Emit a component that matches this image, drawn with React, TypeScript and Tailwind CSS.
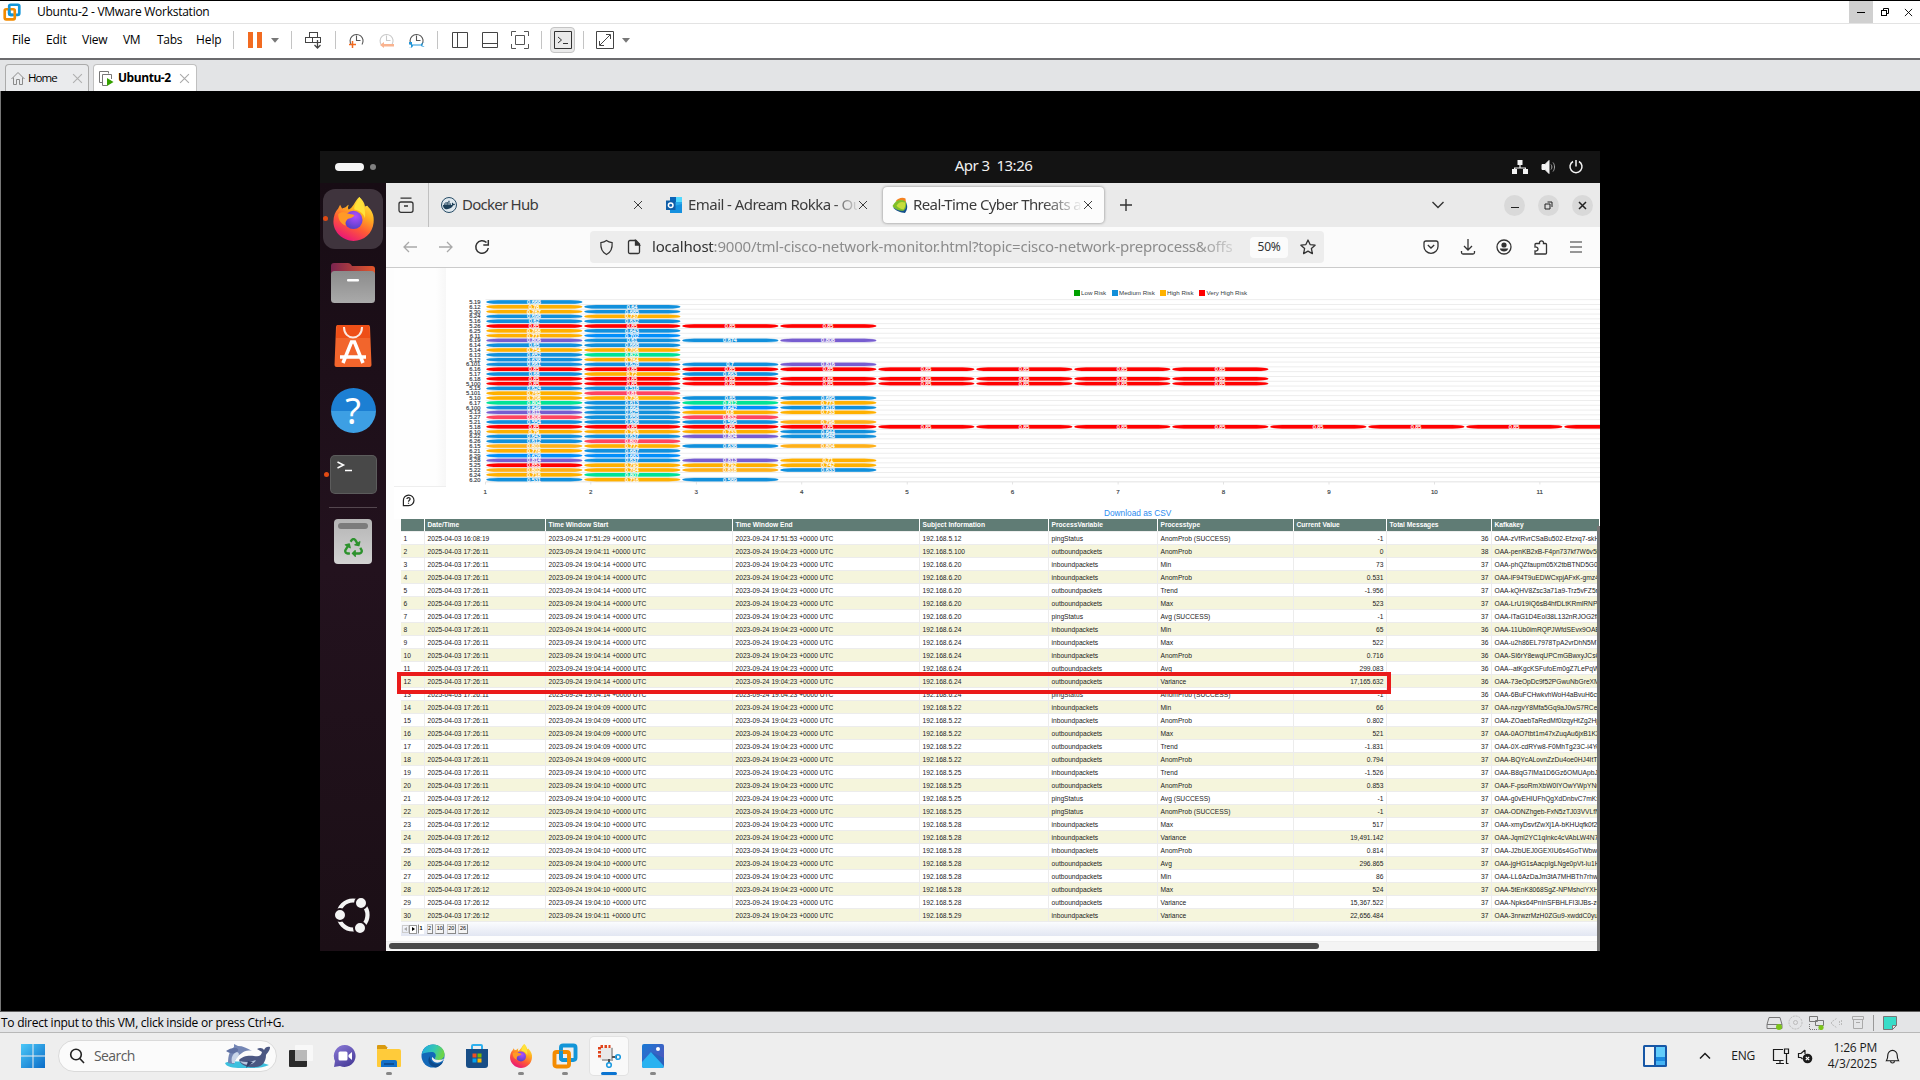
import React from "react";
import { FaDocker, FaRecycle } from "react-icons/fa";

const UI = "font-['Open_Sans','Noto_Sans',sans-serif]";

/* ---------- shared drawings ---------- */

function FirefoxLogo({ className }: { className: string }) {
  return (
    <svg viewBox="0 0 44 46" className={className}>
      <defs>
        <linearGradient id="ffBody" x1="0.8" y1="0" x2="0.3" y2="1">
          <stop offset="0" stopColor="#fff04a" />
          <stop offset="0.35" stopColor="#ffb01f" />
          <stop offset="0.65" stopColor="#ff5a36" />
          <stop offset="1" stopColor="#e8127c" />
        </linearGradient>
        <radialGradient id="ffCore" cx="0.6" cy="0.3" r="0.8">
          <stop offset="0" stopColor="#b04dff" />
          <stop offset="1" stopColor="#4a3fc0" />
        </radialGradient>
      </defs>
      <path d="M28 0c5 4 6 9 6 10 2-1 3-1 3 0 4 4 7 9 6 17-1 11-10 19-21 19S1 37 1 26c0-6 2-11 5-14l2-4 2 4 3-1c1 0 2-2 4-3-1 3-1 4 0 5 4-1 6-8 11-13z" fill="url(#ffBody)" />
      <circle cx="22" cy="24" r="9.5" fill="url(#ffCore)" />
      <path d="M6 18c3-3 7-2 9-1 3 1 6 1 8 2-2 3-5 3-7 4-2 2-3 4-2 7-5-2-8-6-8-12z" fill="#ff9a26" />
      <path d="M28 0c-1 5-6 8-5 13 6 1 10 5 11 9 1-7-1-15-6-22z" fill="#ffe23a" />
    </svg>
  );
}

function VmwareLogo({ className }: { className: string }) {
  return (
    <svg viewBox="0 0 24 24" className={className} fill="none" strokeWidth="3.6">
      <rect x="8.3" y="2.3" width="13.4" height="13.4" rx="2" stroke="#1295d8" />
      <rect x="2.3" y="8.3" width="13.4" height="13.4" rx="2" stroke="#f38b00" />
      <path d="M8.3 7v6.7a2 2 0 0 0 2 2H13" stroke="#1295d8" />
    </svg>
  );
}

function Cross({ className }: { className: string }) {
  return (
    <svg viewBox="0 0 10 10" className={className} fill="none" stroke="currentColor">
      <path d="M1 1l8 8M9 1l-8 8" />
    </svg>
  );
}

/* ---------- VMware window chrome ---------- */

function TitleBar() {
  return (
    <div className="flex h-6 shrink-0 items-center border-t border-b border-t-black border-b-[#e3e3e3] bg-white pl-[3px]">
      <VmwareLogo className="size-[18px]" />
      <span className="ml-4 text-[12px] leading-none tracking-[-0.26px] text-black">Ubuntu-2 - VMware Workstation</span>
      <div className="ml-auto flex h-full">
        <div className="flex w-6 items-center justify-center bg-[#d0d0d0]">
          <div className="h-px w-2 bg-black" />
        </div>
        <div className="flex w-[23px] items-center justify-center">
          <svg viewBox="0 0 10 10" className="size-[10px]" fill="none" stroke="#000">
            <rect x="1.5" y="3.5" width="5" height="5" />
            <path d="M3.5 3V1.500h5v5H7" />
          </svg>
        </div>
        <div className="flex w-6 items-center justify-center">
          <Cross className="size-[9px] text-black" />
        </div>
      </div>
    </div>
  );
}

function Sep({ className }: { className: string }) {
  return <div className={"h-[18px] w-px shrink-0 bg-[#c4c4c4] " + className} />;
}

function ClockIcon({ stroke, children }: { stroke: string; children: React.ReactNode }) {
  return (
    <svg viewBox="0 0 18 18" className="size-[18px]" fill="none">
      <path d="M3.500 14A6.500 6.500 0 1 1 14 13.500M8.500 4.500v5h4" stroke={stroke} strokeWidth="1.1" />
      {children}
    </svg>
  );
}

function MenuBar() {
  return (
    <div className="flex h-[34px] shrink-0 items-center bg-white pb-[2px] pl-3 text-[12px] leading-none text-black">
      <span className="w-[34px] tracking-[-0.2px]">File</span>
      <span className="w-9 tracking-[-0.2px]">Edit</span>
      <span className="w-[41px] tracking-[-0.2px]">View</span>
      <span className="w-[34px] tracking-[-0.4px]">VM</span>
      <span className="w-[39px] tracking-[-0.3px]">Tabs</span>
      <span className="w-[37px] tracking-[-0.1px]">Help</span>
      <Sep className="" />
      <div className="ml-[14px] flex gap-1">
        <div className="h-4 w-[5px] bg-[#f26b21]" />
        <div className="h-4 w-[5px] bg-[#f26b21]" />
      </div>
      <svg viewBox="0 0 8 5" className="ml-[9px] h-[5px] w-2" fill="#777"><path d="M0 0h8L4 4.800z" /></svg>
      <Sep className="ml-[12px]" />
      <svg viewBox="0 0 18 18" className="ml-[13px] size-[18px]" fill="none" stroke="#444">
        <rect x="4.500" y="1.500" width="8" height="5" />
        <rect x="0.500" y="6.500" width="7" height="5" />
        <rect x="7.500" y="6.500" width="8" height="5" />
        <path d="M12.500 9v8M9.500 14l3 3 3-3" strokeWidth="1.300" />
      </svg>
      <Sep className="ml-[12px]" />
      <div className="ml-3 flex gap-3">
        <ClockIcon stroke="#555"><path d="M1 13.500h7M4.500 10v7" stroke="#f26b21" strokeWidth="1.500" /></ClockIcon>
        <ClockIcon stroke="#c9c9c9"><path d="M2 14l4-3v2h10v2.500H6V17z" fill="#f9b38f" /></ClockIcon>
        <ClockIcon stroke="#555"><path d="M1 11h3v2.500h9c0-2 3-2 3.500-1.500h-2v3h2c-.5 1-3 1-3.500-.5H5C5 17 2 17 1 16.500h2v-3H1z" fill="#2196d9" /></ClockIcon>
      </div>
      <Sep className="ml-[11px]" />
      <div className="ml-[13px] flex gap-3">
        <svg viewBox="0 0 18 18" className="size-[18px]" fill="none" stroke="#444"><path d="M1.500 1.500h15v15h-15zM6.500 1.500v15" /></svg>
        <svg viewBox="0 0 18 18" className="size-[18px]" fill="none" stroke="#444"><path d="M1.500 1.500h15v15h-15zM1.500 12.500h15" /></svg>
        <svg viewBox="0 0 18 18" className="size-[18px]" fill="none" stroke="#555"><path d="M5 .5H.5V5M13 .5h4.500V5M5 17.500H.5V13M13 17.500h4.500V13M4.500 4.500h9v9h-9z" /></svg>
      </div>
      <Sep className="ml-[12px]" />
      <div className="ml-2 flex h-[26px] w-[25px] items-center justify-center rounded border border-[#c4c4c4] bg-[#eaeaea]">
        <svg viewBox="0 0 18 18" className="size-[18px]" fill="none" stroke="#333"><path d="M.5 .5h17v17H.5zM4 6l3.500 3L4 12M9 12.500h5" /></svg>
      </div>
      <Sep className="ml-[8px]" />
      <svg viewBox="0 0 18 18" className="ml-[12px] size-[18px]" fill="none" stroke="#444"><path d="M.5 .5h17v17H.5zM4 14L14 4M10 3.500h4.500V8M8 14.500H3.500V10" /></svg>
      <svg viewBox="0 0 8 5" className="ml-2 h-[5px] w-2" fill="#777"><path d="M0 0h8L4 4.800z" /></svg>
    </div>
  );
}

function VmTabs() {
  return (
    <div className="flex h-[33px] shrink-0 items-end border-t-2 border-t-[#6b6b6e] bg-[#e3e4e6] pl-[5px] text-[12px] leading-none text-black">
      <div className="flex h-[27px] w-[84px] items-center rounded-t-sm border border-b-0 border-[#ababab] bg-[#eaebed] pl-[5px]">
        <svg viewBox="0 0 14 14" className="size-[14px]" fill="none" stroke="#8a8a8a"><path d="M.5 8L7 1.500 13.500 8M2.500 6.500v7h3v-5h3v5h3v-7" /></svg>
        <span className="ml-[3px] text-[11.500px] tracking-[-0.9px]">Home</span>
        <Cross className="mr-[5px] ml-auto size-[11px] text-[#b0b0b0]" />
      </div>
      <div className="ml-1 flex h-[27px] w-[104px] items-center rounded-t-sm border border-b-0 border-[#c0c0c0] bg-white pl-[5px]">
        <svg viewBox="0 0 15 15" className="size-[15px]" fill="none" stroke="#777">
          <path d="M3.500 11.500h-3V.5h9v2M8 14.500H3.500v-11h9V8" />
          <path d="M8 7l6.500 4L8 15z" fill="#35a000" stroke="none" />
        </svg>
        <span className="ml-1 font-bold tracking-[-0.45px]">Ubuntu-2</span>
        <Cross className="mr-[6px] ml-auto size-[11px] text-[#aaa]" />
      </div>
    </div>
  );
}

function StatusBar() {
  return (
    <div className="flex h-[22px] shrink-0 items-center border-t border-b border-t-[#5e5e5e] border-b-[#b8b8b8] bg-[#e4e5e7] pt-px pl-px">
      <span className="pt-px text-[12px] leading-none tracking-[-0.25px] text-black">To direct input to this VM, click inside or press Ctrl+G.</span>
      <div className="mr-[23px] ml-auto flex items-center">
        <svg viewBox="0 0 17 15" className="h-[15px] w-[17px]" fill="none" stroke="#777"><path d="M3 2.500h11l2 7v4H1v-4zM1 9.500h15" /><circle cx="13" cy="12" r="3" fill="#7cc41c" stroke="none" /></svg>
        <svg viewBox="0 0 15 15" className="ml-[5px] size-[15px]" fill="none" stroke="#bbb"><circle cx="7.500" cy="7.500" r="6.500" strokeDasharray="2 1" /><circle cx="7.500" cy="7.500" r="2" /></svg>
        <svg viewBox="0 0 15 15" className="ml-[6px] size-[15px]" fill="none" stroke="#777"><path d="M.5 1.500h8v5h-8zM6.500 5.500h8v5h-8z" fill="#e4e5e7" /><path d="M.5 9v5.500h9" strokeDasharray="1 1" /><circle cx="12" cy="12.500" r="2.600" fill="#7cc41c" stroke="none" /></svg>
        <svg viewBox="0 0 12 12" className="ml-[7px] size-[12px]" fill="none" stroke="#bbb"><path d="M5.500 1.500l-5 3.500v2l5 3.500M8.500 4v4M10.500 3v6" strokeDasharray="2 1" /></svg>
        <svg viewBox="0 0 12 13" className="ml-[9px] h-[13px] w-3" fill="none" stroke="#aaa"><path d="M.5 .5h11v3H.5zM1.500 3.500v9h9v-9M4 6.500h4" /></svg>
        <div className="ml-[9px] h-4 w-px bg-[#999]" />
        <svg viewBox="0 0 14 14" className="ml-[9px] size-[14px]"><path d="M.5 .5h13v9l-4 4h-9z" fill="#38dcc8" stroke="#777" /><path d="M9.500 13.500v-4h4z" fill="#e4e5e7" stroke="#777" /></svg>
      </div>
    </div>
  );
}

/* ---------- Ubuntu guest desktop ---------- */

function GnomeBar() {
  return (
    <div className="grid h-8 shrink-0 grid-cols-3 items-center bg-[#131313] text-[#f0f0f0]">
      <div className="flex items-center pl-[15px]">
        <div className="h-2 w-[29px] rounded-full bg-[#f4f4f4]" />
        <div className="ml-[6px] size-[6px] rounded-full bg-[#808080]" />
      </div>
      <span className="ml-[67px] justify-self-center pb-[3px] text-[15px] leading-none tracking-[-0.5px] whitespace-pre">Apr 3  13:26</span>
      <div className="flex items-center justify-end pr-[16px] pb-px">
        <svg viewBox="0 0 16 14" className="h-[14px] w-4" fill="#f4f4f4"><path d="M5.500 0h5v5h-5zM0 9h5v5H0zM11 9h5v5h-5zM7.400 5h1.200v2.400H14V9h-1.200V8.500H3.200V9H2V7.400h5.400z" /></svg>
        <svg viewBox="0 0 16 14" className="ml-[13px] h-[14px] w-4" fill="none" stroke="#f4f4f4"><path d="M1 4.500h3l4-4v13l-4-4H1z" fill="#f4f4f4" /><path d="M10 4.500c1.200 1.500 1.200 3.500 0 5M12 2.500c2 2.500 2 6.500 0 9" stroke="#a5a5a5" /></svg>
        <svg viewBox="0 0 16 16" className="ml-[11px] size-4" fill="none" stroke="#f4f4f4" strokeWidth="1.500"><path d="M5 2.500a6 6 0 1 0 6 0M8 1v6.500" /></svg>
      </div>
    </div>
  );
}

function Dock() {
  return (
    <div className="flex w-[66px] shrink-0 flex-col items-center bg-linear-to-b from-[#170c14] via-[#23121e] to-[#1b0f16]">
      <div className="relative mt-[6px] flex h-[60px] w-[60px] items-center justify-center rounded-xl bg-[#3f343d]">
        <div className="absolute top-[27px] left-0 size-[5px] rounded-full bg-[#e24a13]" />
        <FirefoxLogo className="h-[44px] w-[43px]" />
      </div>
      <svg viewBox="0 0 46 42" className="mt-[13px] h-[42px] w-[46px]">
        <defs>
          <linearGradient id="fold"><stop offset="0" stopColor="#7a2450" /><stop offset="1" stopColor="#e2562a" /></linearGradient>
          <linearGradient id="foldf" x2="0" y2="1"><stop offset="0" stopColor="#8b8b8b" /><stop offset="1" stopColor="#aaa" /></linearGradient>
        </defs>
        <path d="M1 4q0-3 3-3h14q2 0 3 1.500l1 1.500h20q3 0 3 3v10H1z" fill="url(#fold)" />
        <rect x="1" y="9" width="44" height="32" rx="3.500" fill="url(#foldf)" />
        <rect x="17" y="17" width="12" height="2.500" rx="1" fill="#fff" />
      </svg>
      <svg viewBox="0 0 38 44" className="mt-[20px] h-[44px] w-[38px]" fill="none">
        <path d="M4 1h30q2 0 2 2l1.500 38q0 2-2 2h-33q-2 0-2-2L2 3q0-2 2-2z" fill="#f2652c" />
        <path d="M3 1h32l1 13H2z" fill="#ee4f17" />
        <path d="M10 3c0 14 18 14 18 0" stroke="#fbe9e0" strokeWidth="2" />
        <path d="M9 39L17.500 18h3L29 39M6 33h26" stroke="#fff" strokeWidth="3.500" />
      </svg>
      <div className="mt-5 flex size-[45px] items-center justify-center rounded-full bg-linear-to-b from-[#1c7fd3] from-50% to-[#3d9fe4] to-50% text-[36px] leading-none text-white">?</div>
      <div className="relative mt-[23px] flex h-[37px] w-[45px] rounded bg-[#484848] ring-1 ring-[#5c5c5c]">
        <div className="absolute top-[16px] -left-[7px] size-[5px] rounded-full bg-[#e24a13]" />
        <svg viewBox="0 0 45 37" className="h-[37px] w-[45px]" fill="none" stroke="#fff" strokeWidth="1.500"><path d="M6.500 6l6 3-6 3M14 14.500h7" /></svg>
      </div>
      <div className="mt-[14px] h-px w-12 bg-[#54474f]" />
      <div className="mt-[11px] flex h-[45px] w-[38px] flex-col items-center rounded bg-linear-to-b from-[#b5b5b5] to-[#d2d2d2] pt-1">
        <div className="h-[6px] w-[30px] rounded-full bg-[#7c7c7c]" />
        <FaRecycle className="mt-[9px] size-[19px] text-[#2d922d]" />
      </div>
      <svg viewBox="-20 -20 40 40" className="mt-auto mb-4 size-10" fill="none">
        <circle r="14.500" stroke="#f4f4f4" strokeWidth="4.200" />
        <g fill="#f4f4f4" stroke="#1d1018" strokeWidth="2">
          <circle cx="-13" cy="0" r="6" />
          <circle cx="8" cy="-12" r="6" />
          <circle cx="7" cy="13" r="6" />
        </g>
      </svg>
    </div>
  );
}

function FirefoxTabs() {
  return (
    <div className="flex h-11 shrink-0 items-center bg-[#eaeaea] text-[15px] leading-none text-[#3c3c3c]">
      <svg viewBox="0 0 16 16" className="ml-3 size-4 shrink-0" fill="none" stroke="#333" strokeWidth="1.300"><rect x="1" y="5" width="14" height="10.300" rx="2" /><path d="M2.500 1.200h11M6 9h4" /></svg>
      <div className="ml-[14px] h-full w-px shrink-0 bg-[#c0c0c0]" />
      <div className="flex w-[224px] shrink-0 items-center pl-3">
        <span className="flex size-4 items-center justify-center rounded-full border border-[#274c66] bg-[#dfe8ee]"><FaDocker className="size-3 text-[#1d3f58]" /></span>
        <span className="ml-[5px] pb-[2px] tracking-[-0.75px]">Docker Hub</span>
        <Cross className="mr-[10px] ml-auto size-[10px]" />
      </div>
      <div className="flex w-[230px] shrink-0 items-center pl-[13px]">
        <svg viewBox="0 0 16 16" className="size-4"><path d="M4 0h12v16H4z" fill="#28a8ea" /><path d="M10 0h6v5h-6z" fill="#50d9ff" /><path d="M4 0h6v5H4z" fill="#0a64b8" /><path d="M4 10l12-3v9H4z" fill="#1490df" /><path d="M0 3.500h9.500v9.500H0z" fill="#0f5ea8" /><circle cx="4.700" cy="8.200" r="2.300" fill="none" stroke="#fff" strokeWidth="1.500" /></svg>
        <span className="ml-[6px] w-[169px] [mask-image:linear-gradient(to_right,#000_145px,transparent_172px)] pt-1 pb-[6px] tracking-[-0.55px] whitespace-nowrap">Email - Adream Rokka - Ou</span>
        <Cross className="ml-[1px] size-[10px] shrink-0" />
      </div>
      <div className="flex h-9 w-[221px] shrink-0 items-center rounded bg-[#fcfcfc] pl-[9px] shadow-[0_0_3px_rgba(0,0,0,0.45)]">
        <svg viewBox="0 0 16 16" className="size-4"><path d="M3.500 4.500C6 .5 11 0 13.500 1.500L14 6 10 3.500z" fill="#f58220" /><path d="M.5 9C4 2.500 9 2 13.500 4.500 15 8 14 12 12 14 8 15 3 13 .5 9z" fill="#7fbf2a" /><path d="M4.500 8.500C7 4.500 10 4.500 13 5.500c.5 3 0 5-1.500 7-3-.5-6-2-7-4z" fill="#c5dd3c" /><path d="M1 10c3 3 8 4.500 11 3.500 2-2 2.500-5 2-8.500 2 4 1.500 8-1 11C9 15.500 3 14 1 10z" fill="#14508c" /></svg>
        <span className="ml-[5px] w-[168px] [mask-image:linear-gradient(to_right,#000_130px,transparent_170px)] pt-1 pb-[6px] tracking-[-0.6px] whitespace-nowrap">Real-Time Cyber Threats a</span>
        <Cross className="ml-[2px] size-[10px] shrink-0" />
      </div>
      <svg viewBox="0 0 12 12" className="ml-4 size-3" fill="none" stroke="#333" strokeWidth="1.400"><path d="M6 0v12M0 6h12" /></svg>
      <svg viewBox="0 0 12 8" className="mr-[60px] ml-auto h-2 w-3" fill="none" stroke="#333" strokeWidth="1.400"><path d="M.5 1L6 6.500 11.500 1" /></svg>
      <div className="mr-[7px] flex gap-[13px] text-[#222]">
        <div className="flex size-[21px] items-center justify-center rounded-full bg-[#d9d9d9]"><div className="mt-1 h-px w-2 bg-[#222]" /></div>
        <div className="flex size-[21px] items-center justify-center rounded-full bg-[#d9d9d9]"><svg viewBox="0 0 9 9" className="size-[9px]" fill="none" stroke="#222"><path d="M1 3h5v5H1zM3.500 1h4.500v5" /></svg></div>
        <div className="flex size-[21px] items-center justify-center rounded-full bg-[#d9d9d9]"><svg viewBox="0 0 9 9" className="size-[9px]" stroke="#222" strokeWidth="1.500"><path d="M1 1l7 7M8 1L1 8" /></svg></div>
      </div>
    </div>
  );
}

function FirefoxToolbar() {
  return (
    <div className="flex h-[41px] shrink-0 items-center border-b border-[#cbcbcb] bg-[#fbfbfb] text-[#333]">
      <svg viewBox="0 0 14 12" className="ml-[17px] h-3 w-[14px]" fill="none" stroke="#a9a9a9" strokeWidth="1.300"><path d="M14 6H1M6 1L1 6l5 5" /></svg>
      <svg viewBox="0 0 14 12" className="ml-[22px] h-3 w-[14px]" fill="none" stroke="#a9a9a9" strokeWidth="1.300"><path d="M0 6h13M8 1l5 5-5 5" /></svg>
      <svg viewBox="0 0 16 16" className="ml-[21px] size-4" fill="none" stroke="#333" strokeWidth="1.500"><path d="M14.300 9A6.300 6.300 0 1 1 12.500 3.500M14.300 1v5h-5" /></svg>
      <div className="ml-[100px] flex h-8 w-[734px] items-center rounded bg-[#ededed] pl-[9px]">
        <svg viewBox="0 0 16 18" className="h-[17px] w-[15px]" fill="none" stroke="#333" strokeWidth="1.300"><path d="M8 1.500c2 1.600 4 2 6 2.200C14.500 10 12 14.500 8 16.500 4 14.500 1.500 10 2 3.700c2-.2 4-.6 6-2.200z" /></svg>
        <svg viewBox="0 0 14 16" className="ml-[13px] h-4 w-[14px]" fill="none" stroke="#333" strokeWidth="1.300"><path d="M3 1.500h6l3.500 3.500v8q0 1.500-1.500 1.500H3q-1.500 0-1.500-1.500V3Q1.500 1.500 3 1.500z" /><path d="M8.500 1.500V6h4z" fill="#333" /></svg>
        <span className="ml-[11px] w-[590px] [mask-image:linear-gradient(to_right,#000_545px,transparent_595px)] pt-1 pb-[6px] text-[15px] leading-none tracking-[-0.2px] whitespace-nowrap text-[#8c8c8c]"><span className="text-[#333]">localhost</span>:9000/tml-cisco-network-monitor.html?topic=cisco-network-preprocess&amp;offs</span>
        <div className="ml-[8px] flex h-[21px] w-[38px] items-center justify-center rounded-sm bg-[#fbfbfb] text-[12px] leading-none tracking-[-0.3px]">50%</div>
        <svg viewBox="0 0 16 16" className="ml-3 size-4" fill="none" stroke="#333" strokeWidth="1.300" strokeLinejoin="round"><path d="M8 1l2.100 4.600 5 .6-3.700 3.400 1 5L8 12.100l-4.400 2.500 1-5L.9 6.200l5-.6z" /></svg>
      </div>
      <div className="mr-[17px] ml-auto flex items-center gap-[20.500px]">
        <svg viewBox="0 0 16 16" className="size-4" fill="none" stroke="#333" strokeWidth="1.300"><path d="M3 2h10q2 0 2 2v3.500a7 6.800 0 0 1-14 0V4q0-2 2-2zM4.800 6L8 9l3.200-3" /></svg>
        <svg viewBox="0 0 16 16" className="size-4" fill="none" stroke="#333" strokeWidth="1.300"><path d="M8 0v11M4 7l4 4 4-4M1.500 12v1.500q0 1.500 1.500 1.500h10q1.500 0 1.500-1.500V12" /></svg>
        <svg viewBox="0 0 16 16" className="size-4" fill="none" stroke="#333" strokeWidth="1.300"><circle cx="8" cy="8" r="7" /><circle cx="8" cy="6" r="2.600" fill="#333" stroke="none" /><path d="M3.800 9.500h8.400C11.500 13.500 4.500 13.500 3.800 9.500z" fill="#333" stroke="none" /></svg>
        <svg viewBox="0 0 16 16" className="size-4" fill="none" stroke="#333" strokeWidth="1.300"><path d="M2 15h10.500q1 0 1-1V5.500q0-1-1-1H10.500C11 1 6 1 6.500 4.500H3q-1 0-1 1V8c4-.5 4 4.500 0 4z" /></svg>
        <svg viewBox="0 0 14 12" className="h-3 w-[14px]" fill="none" stroke="#333" strokeWidth="1.200"><path d="M1 1h12M1 6h12M1 11h12" /></svg>
      </div>
    </div>
  );
}

/* ---------- page: risk heat rows ---------- */

const FILL: Record<string, string> = {
  B: "#1190dc",
  b: "#008ffb",
  Y: "#ffb000",
  O: "#feb019",
  R: "#ff0000",
  P: "#775dd0",
  G: "#00e396",
  K: "#ff4560",
};

const RISK: [string, string][] = [
  ["5.19", "B.668"],
  ["6.12", "Y.78 B.64"],
  ["5.30", "Y.767 B.685"],
  ["6.24", "B.698 Y.737"],
  ["5.16", "B.62 B.632"],
  ["5.26", "R.85 R.85 R.85 R.85"],
  ["6.25", "Y.768 B.643"],
  ["6.11", "Y.771 b.702"],
  ["6.19", "P.806 B.61 B.674 P.808"],
  ["6.14", "B.65 B.668"],
  ["5.14", "Y.754 Y.706"],
  ["6.13", "B.652 G.823"],
  ["5.12", "B.638 Y.764"],
  ["6.101", "B.661 B.628 B.7 P.816"],
  ["6.16", "R.85 R.85 R.85 R.85 R.85 R.85 R.85 R.85"],
  ["5.17", "B.68 Y.72 B.663"],
  ["6.18", "R.85 R.85 R.85 R.85 R.85 R.85 R.85 R.85"],
  ["5.100", "R.85 R.85 R.85 R.85 R.85 R.85 R.85 R.85"],
  ["5.15", "B.624 B.518"],
  ["5.101", "Y.765 K.81"],
  ["5.10", "Y.706 Y.736 B.65 B.695"],
  ["6.17", "G.804 B.613 G.812 Y.773"],
  ["6.100", "B.646 B.664 b.642 B.618"],
  ["5.13", "P.811 B.625 Y.8 Y.733"],
  ["5.27", "K.808 B.658 K.832"],
  ["5.21", "B.554 B.636 B.595 O.798"],
  ["5.18", "R.85 R.85 R.85 R.85 R.85 R.85 R.85 R.85 R.85 R.85 R.85 R.85"],
  ["6.10", "Y.79 Y.793 Y.733 B.644"],
  ["6.22", "B.643 B.637 P.804 B.648"],
  ["6.26", "B.612 K.807"],
  ["6.15", "O.801 Y.772 B.638 O.804"],
  ["6.21", "Y.778 B.687"],
  ["6.29", "b.626 b.683"],
  ["5.28", "P.814 B.637 P.813 Y.71"],
  ["5.25", "R.853 Y.793 Y.792 Y.742"],
  ["5.22", "O.802 Y.784 O.818 B.633"],
  ["6.24", "Y.718 G.807"],
  ["6.20", "B.531 Y.716 B.589"],
];

const PITCH = 4.8;

function RiskChart() {
  return (
    <svg viewBox="0 0 1154 248" className="h-[248px] w-[1154px] font-['Liberation_Sans',sans-serif]">
      {RISK.map((_, i) => (
        <rect key={i} x="39.500" y={31.200 + i * PITCH} width="1115" height="0.900" fill="#ebebeb" />
      ))}
      <rect x="39.500" y="213" width="1115" height="1.500" fill="#ececec" />
      {RISK.map(([label, cells], i) => {
        const cy = 34 + i * PITCH;
        return (
          <g key={i}>
            <text x="34.500" y={cy + 2} fontSize="5.800" textAnchor="end" fill="#3a4248" stroke="#3a4248" strokeWidth="0.150">{label}</text>
            {cells.split(" ").map((cell, j) => (
              <g key={j}>
                <rect x={39.800 + j * 98} y={cy - 2.100} width="97" height="4.200" rx="12" ry="2.100" fill={FILL[cell[0]]} opacity="0.35" />
                <rect x={40.300 + j * 98} y={cy - 1.700} width="96" height="3.400" rx="12" ry="1.700" fill={FILL[cell[0]]} />
                <text x={88 + j * 98} y={cy + 1.900} fontSize="5.500" textAnchor="middle" fill="#fff" stroke="#fff" strokeWidth="0.200">{"0" + cell.slice(1)}</text>
              </g>
            ))}
          </g>
        );
      })}
      {Array.from({ length: 11 }, (_, i) => (
        <g key={i}>
          <rect x={39 + i * 105.450} y="214" width="0.800" height="2.500" fill="#ddd" />
          <text x={39.300 + i * 105.450} y="225.700" fontSize="6.200" textAnchor="middle" fill="#373d3f" stroke="#373d3f" strokeWidth="0.150">{i + 1}</text>
        </g>
      ))}
      <g fontSize="6.200" fill="#373d3f">
        <rect x="628" y="22" width="6" height="6" fill="#00a100" />
        <text x="635" y="27.300">Low Risk</text>
        <rect x="666" y="22" width="6" height="6" fill="#128fd9" />
        <text x="673" y="27.300">Medium Risk</text>
        <rect x="714" y="22" width="6" height="6" fill="#ffb200" />
        <text x="721" y="27.300">High Risk</text>
        <rect x="753" y="22" width="6" height="6" fill="#ff0000" />
        <text x="760.500" y="27.300">Very High Risk</text>
      </g>
    </svg>
  );
}

/* ---------- page: message table ---------- */

const GRID = "grid grid-cols-[24px_121px_187px_187px_129px_109px_136px_93px_105px_108px]";
const HEAD = ["", "Date/Time", "Time Window Start", "Time Window End", "Subject Information", "ProcessVariable", "Processtype", "Current Value", "Total Messages", "Kafkakey"];

// date suffix | window start | window end | host | direction | type | value | messages | key
const ROWS = `16:08:19|17:51:29|17:51:53|5.12|ping|AnomProb (SUCCESS)|-1|36|zVfRvrCSaBu502-Efzxq7-skH
17:26:11|19:04:11|19:04:23|5.100|out|AnomProb|0|38|penKB2xB-F4pn737kf7W6v5b
17:26:11|19:04:14|19:04:23|6.20|in|Min|73|37|phQZfaupm05X2tbBTND5G0o
17:26:11|19:04:14|19:04:23|6.20|in|AnomProb|0.531|37|lF94T9uEDWCxpjAFxK-gmz4
17:26:11|19:04:14|19:04:23|6.20|out|Trend|-1.956|37|kQHV8Zsc3a71a9-Trz5vFZ5r
17:26:11|19:04:14|19:04:23|6.20|out|Max|523|37|LrU19IQ6sB4hfDLtKRmlRNP4
17:26:11|19:04:14|19:04:23|6.20|ping|Avg (SUCCESS)|-1|37|ITaG1D4Eol38L132nRJOG2f8
17:26:11|19:04:14|19:04:23|6.24|in|Min|65|36|11Ub0imRQPJWfdSEvx9OAB
17:26:11|19:04:14|19:04:23|6.24|in|Max|522|36|u2h86EL7978TpA2vrDhN5M7
17:26:11|19:04:14|19:04:23|6.24|in|AnomProb|0.716|36|SI6rY8ewqUPCmGBwxyJCsQ
17:26:11|19:04:14|19:04:23|6.24|out|Avg|299.083|36|-atKgcKSFufoEm0gZ7LePqW
17:26:11|19:04:14|19:04:23|6.24|out|Variance|17,165.632|36|73eOpDc9f52PGwuNbGreXM
17:26:11|19:04:14|19:04:23|6.24|ping|AnomProb (SUCCESS)|-1|36|6BuFCHwkvhWoH4aBvuH6cv
17:26:11|19:04:09|19:04:23|5.22|in|Min|66|37|nzgvY8Mfa5Gq9aJ0wS7RCeC
17:26:11|19:04:09|19:04:23|5.22|in|AnomProb|0.802|37|ZOaebTaRedMf0lzqyHtZg2Hp
17:26:11|19:04:09|19:04:23|5.22|out|Max|521|37|0AO7tbt1m47xZuqAu6jxB1K3
17:26:11|19:04:09|19:04:23|5.22|out|Trend|-1.831|37|0X-cdRYw8-F0MhTg23C-i4Ye
17:26:11|19:04:09|19:04:23|5.22|out|AnomProb|0.794|37|BQYcALovnZzDu4oe0HJ4ItTu
17:26:11|19:04:10|19:04:23|5.25|in|Trend|-1.526|37|B8qG7IMa1D6Gz6OMUApbJf
17:26:11|19:04:10|19:04:23|5.25|out|AnomProb|0.853|37|F-psoRmXbW0IYOwYWpYNu
17:26:12|19:04:10|19:04:23|5.25|ping|Avg (SUCCESS)|-1|37|g0vEHIUFhQgXdDnbvC7mKx
17:26:12|19:04:10|19:04:23|5.25|ping|AnomProb (SUCCESS)|-1|37|ODNZhgeb-FxN5zTJ03VVLfN
17:26:12|19:04:10|19:04:23|5.28|in|Max|517|37|xmyDsvfZwXj1A-bKHUqfk0f25
17:26:12|19:04:10|19:04:23|5.28|in|Variance|19,491.142|37|Jqml2YC1qInkc4cVAbLW4N7J
17:26:12|19:04:10|19:04:23|5.28|in|AnomProb|0.814|37|J2bUEJ0GEXIU6s4GoTWbwQ
17:26:12|19:04:10|19:04:23|5.28|out|Avg|296.865|37|jgHG1sAacpIgLNge0pVt-Iu1H
17:26:12|19:04:10|19:04:23|5.28|out|Min|86|37|LL6AzDaJm3tA7MHBTh7rhwS
17:26:12|19:04:10|19:04:23|5.28|out|Max|524|37|5tEnK8068SgZ-NPMshclYXH1
17:26:12|19:04:10|19:04:23|5.28|out|Variance|15,367.522|37|Npks64PnInSFBHLFI3IJBs-zC
17:26:12|19:04:11|19:04:23|5.29|in|Variance|22,656.484|37|3nrwzrMzH0ZGu9-xwddC0yu`
  .split("\n")
  .map((line, i) => {
    const [d, s, e, host, dir, type, value, count, key] = line.split("|");
    const variable = dir === "ping" ? "pingStatus" : dir + "boundpackets";
    return [String(i + 1), "2025-04-03 " + d, `2023-09-24 ${s} +0000 UTC`, `2023-09-24 ${e} +0000 UTC`, "192.168." + host, variable, type, value, count, "OAA-" + key];
  });

function PageButton({ children, active }: { children: React.ReactNode; active?: boolean }) {
  return (
    <span className={"flex h-[10px] items-center border px-[0.500px] text-[5.500px] leading-none text-black " + (active ? "border-transparent border-l-[#888] bg-white font-bold" : "border-[#c9c9c9] border-r-[#888] border-b-[#888] bg-[#f4f4f4]")}>
      {children}
    </span>
  );
}

function DataTable() {
  return (
    <div className="relative ml-[15px] w-[1199px] text-[6.67px] leading-none text-[#222]">
      <div className={GRID + " h-[13px] border-b border-[#eee] font-bold text-white"}>
        {HEAD.map((h, i) => (
          <div key={i} className="flex items-center border-r border-white bg-[#607c75] pl-[2.500px] whitespace-nowrap">{h}</div>
        ))}
      </div>
      {ROWS.map((row, r) => (
        <div key={r} className={GRID + " h-[13px] border-b border-[#ececec] " + (r % 2 ? "bg-[#f5f5dc]" : "bg-white")}>
          {row.map((cell, c) => (
            <div key={c} className={"flex items-center overflow-hidden border-r border-[#ececec] px-[2.500px] pt-[2px] whitespace-nowrap " + (c === 7 || c === 8 ? "justify-end" : "")}>{cell}</div>
          ))}
        </div>
      ))}
      <div className="flex h-[14px] items-center bg-linear-to-b from-[#fbfcfe] to-[#e2e6f2] pl-px">
        <span className="flex h-2 w-[7px] items-center justify-center border border-[#ccc] text-[#aaa]">
          <svg viewBox="0 0 3 4" className="h-1 w-[3px]" fill="currentColor"><path d="M3 0v4L0 2z" /></svg>
        </span>
        <span className="mr-px flex h-[9px] w-2 items-center justify-center border border-[#999] bg-white text-black">
          <svg viewBox="0 0 3 4" className="h-1 w-[3px]" fill="currentColor"><path d="M0 0v4l3-2z" /></svg>
        </span>
        <div className="flex gap-[2.500px]">
          <PageButton active>1</PageButton>
          <PageButton>2</PageButton>
          <PageButton>10</PageButton>
          <PageButton>20</PageButton>
          <PageButton>26</PageButton>
        </div>
      </div>
      {/* highlighted record */}
      <div className="absolute top-[153px] -left-1 h-[22px] w-[994px] border-4 border-[#ea1b1b]" />
    </div>
  );
}

function Page() {
  return (
    <div className="relative flex min-h-0 grow flex-col overflow-hidden bg-[#fdfdfd] font-['Liberation_Sans',sans-serif]">
      <div className="flex h-[251px] shrink-0">
        <div className="flex w-[60px] shrink-0 flex-col pl-2">
          <div className="h-[219px] border-b border-[#eee] bg-linear-to-r from-[#fefefe] from-80% to-[#f7f7f7]" />
          <div className="grow bg-white pt-[7px] pl-2">
            <svg viewBox="0 0 14 14" className="size-[13px]" fill="none" stroke="#222" strokeWidth="1.300"><path d="M1.500 12.500V7A5.700 5.700 0 1 1 7 12.500zM5.300 5.500c0-2.300 3.600-2.100 3.400 0C8.600 6.800 7 6.700 7 8.300M7 9.300v1.200" /></svg>
          </div>
        </div>
        <div className="relative h-[251px] bg-white">
          <RiskChart />
          <span className="absolute top-[241px] left-[658px] text-[8.300px] leading-none text-[#2d8cf0]">Download as CSV</span>
        </div>
      </div>
      <DataTable />
      <div className="mt-[5px] flex h-[9px] items-center border-t border-[#eee] bg-[#f4f4f4] pl-[3px]">
        <div className="h-[6px] w-[930px] rounded-full bg-[#4a4a4a]" />
      </div>
      <div className="absolute top-[258px] right-0 h-[425px] w-[3px] bg-[#747474]" />
    </div>
  );
}

function Guest() {
  return (
    <div className="flex h-[800px] w-[1280px] flex-col overflow-hidden bg-white font-['Noto_Sans',sans-serif]">
      <GnomeBar />
      <div className="flex min-h-0 grow">
        <Dock />
        <div className="flex min-w-0 grow flex-col">
          <FirefoxTabs />
          <FirefoxToolbar />
          <Page />
        </div>
      </div>
    </div>
  );
}

/* ---------- Windows taskbar ---------- */

function TaskItem({ mark, active, children }: { mark?: boolean; active?: boolean; children: React.ReactNode }) {
  return (
    <div className={"relative flex h-[38px] w-[38px] items-center justify-center rounded " + (active ? "bg-[#f9f9f9] ring-1 ring-[#e2e2e2]" : "")}>
      {children}
      {mark && <div className={"absolute bottom-0 h-[3px] rounded-full " + (active ? "w-4 bg-[#0b74d1]" : "w-[6px] bg-[#868686]")} />}
    </div>
  );
}

function Taskbar() {
  return (
    <div className="flex h-[47px] shrink-0 items-center bg-[#eeeeee] pb-px pl-[21px] text-[#1b1b1b]">
      <svg viewBox="0 0 24 24" className="size-6">
        <defs><linearGradient id="win" x2="1" y2="1"><stop offset="0" stopColor="#4cc8f8" /><stop offset="1" stopColor="#0a6cc8" /></linearGradient></defs>
        <path d="M0 0h11.500v11.500H0zM12.500 0H24v11.500H12.500zM0 12.500h11.500V24H0zM12.500 12.500H24V24H12.500z" fill="url(#win)" />
      </svg>
      <div className="ml-[13px] flex h-8 w-[219px] items-center rounded-full border border-[#dadada] bg-[#fbfbfb] pl-[10px]">
        <svg viewBox="0 0 16 16" className="size-4" fill="none" stroke="#222" strokeWidth="1.600"><circle cx="7" cy="6.500" r="5.300" /><path d="M10.800 10.500L15 15" /></svg>
        <span className="ml-[9px] text-[14px] leading-none tracking-[-0.6px] text-[#5c5c5c]">Search</span>
        <svg viewBox="0 0 48 26" className="mr-[4px] ml-auto h-[26px] w-12">
          <path d="M1 20c6-4 14 0 20-2s15 1 24 4c-8 4-20 3-28 3S2 24 1 20z" fill="#3dc0de" />
          <path d="M4 20C4 12 6 7 10 4l0-3 4 2c5 0 9 2 14 5-4-1-8 0-10 2-5 3-7 6-8 11z" fill="#7486b4" />
          <path d="M2 8c3-2 5-3 9-3 3 0 4 2 2 4-3 2-7 2-11-1z" fill="#5f71a3" />
          <path d="M8 20c-1-5 0-9 5-11 3 1 2 4 0 6s-2 3-2 5z" fill="#c9d6ea" />
          <path d="M15 17c3-4 10-5 15-4 5 1 7 0 8-4l-5-3c3-2 6-1 7 1 1-3 4-4 6-3 0 4-3 6-4 8 0 7-4 12-10 12-7 1-15-1-17-7z" fill="#4b5782" />
          <path d="M16 18c5 2 11 1 16-1-2 5-12 7-16 1z" fill="#b8c5dd" />
          <path d="M24 18l-2 7 7-6z" fill="#333f68" />
        </svg>
      </div>
      <div className="ml-[5px] flex gap-[6px]">
        <TaskItem><svg viewBox="0 0 24 24" className="size-6"><rect x="0" y="6" width="18" height="17" rx="1" fill="#2a2a2a" /><rect x="6" y="1" width="18" height="16" rx="1" fill="#f8f8f8" /><path d="M6 6h12v11H6z" fill="#b9b9b9" /></svg></TaskItem>
        <TaskItem><svg viewBox="0 0 24 24" className="size-6"><defs><linearGradient id="chat" x2="0.600" y2="1"><stop offset="0" stopColor="#8c7bd8" /><stop offset="1" stopColor="#4b3f9c" /></linearGradient></defs><path d="M12 1a11 11 0 1 1-5 21L1 23l1-6A11 11 0 0 1 12 1z" fill="url(#chat)" /><rect x="5.500" y="7.500" width="9" height="9" rx="1.500" fill="#fff" /><path d="M15.500 11l3.500-3v8l-3.500-3z" fill="#fff" /></svg></TaskItem>
        <TaskItem mark><svg viewBox="0 0 24 24" className="size-6"><path d="M0 2q0-1 1-1h7l3 3h-1v4H0z" fill="#d99a10" /><path d="M0 5h22q2 0 2 2v15q0 1-1 1H1q-1 0-1-1z" fill="#ffcb3a" /><path d="M4 23v-5q0-2 2-2h12q2 0 2 2v5z" fill="#1470c8" /><path d="M7 19h10v2H7z" fill="#0d4f96" /></svg></TaskItem>
        <TaskItem><svg viewBox="0 0 24 24" className="size-6"><defs><linearGradient id="edgeA" x2="1" y2="0.300"><stop offset="0" stopColor="#1fa7e6" /><stop offset="0.600" stopColor="#35c8b0" /><stop offset="1" stopColor="#6bd44a" /></linearGradient></defs><circle cx="12" cy="12" r="11.500" fill="#1268b8" /><path d="M1 10C2 4 6 .5 12 .5c7 0 11.500 5 11.500 9.500 0 4-3 6-6 6-4 0-4-2-3-3 1-3-1-5-4-5-4 0-8 1-9.500 2z" fill="url(#edgeA)" /><path d="M9 12c-1 5 4 9 10 7.500l3-1.500c-1 2-4 5-7 5.500C9 23 5 17 9 12z" fill="#0c4a8c" /><path d="M23.500 14c-1 3-6 6-10 4-3-2-3-4-2-5 1 2 3 3 6 3 3 0 5-1 6-2z" fill="#eee" /></svg></TaskItem>
        <TaskItem><svg viewBox="0 0 24 24" className="size-6"><path d="M7 6V2q0-1 1-1h8q1 0 1 1v4" fill="none" stroke="#2fb0ee" strokeWidth="2" /><path d="M1 5h22v16q0 3-3 3H4q-3 0-3-3z" fill="#174d86" /><path d="M7.500 9.500h4v4h-4z" fill="#f25022" /><path d="M12.500 9.500h4v4h-4z" fill="#7fba00" /><path d="M7.500 14.500h4v4h-4z" fill="#00a4ef" /><path d="M12.500 14.500h4v4h-4z" fill="#ffb900" /></svg></TaskItem>
        <TaskItem mark><FirefoxLogo className="size-6" /></TaskItem>
        <TaskItem mark><VmwareLogo className="size-[26px]" /></TaskItem>
        <TaskItem mark active><svg viewBox="0 0 24 24" className="size-6" fill="none"><rect x="3" y="3" width="13" height="13" fill="#e9e9e9" /><path d="M2.500 13.500v-11h11" stroke="#e0441c" strokeWidth="3" strokeDasharray="2.500 1.500" /><path d="M15 4v12H5" stroke="#aaa" strokeWidth="2" /><path d="M15 13l5 0M12 15v4" stroke="#555" strokeWidth="2" /><circle cx="21" cy="13" r="2.300" stroke="#1b9ae0" strokeWidth="1.600" /><circle cx="12" cy="21" r="2.300" stroke="#1b9ae0" strokeWidth="1.600" /></svg></TaskItem>
        <TaskItem mark><svg viewBox="0 0 24 24" className="size-6"><defs><linearGradient id="photo" x2="1" y2="1"><stop offset="0" stopColor="#1879d4" /><stop offset="1" stopColor="#5a4fb8" /></linearGradient></defs><rect x="1" y="0" width="22" height="24" rx="2" fill="url(#photo)" /><path d="M1 18L10 8l13 14q0 2-2 2H3q-2 0-2-2z" fill="#29b2f0" /><path d="M10 8l13 14V14z" fill="#1668bd" opacity="0.600" /><circle cx="17" cy="5" r="2" fill="#fff" /></svg></TaskItem>
      </div>
      <div className="ml-auto flex items-center">
        <svg viewBox="0 0 24 22" className="h-[22px] w-6"><rect width="24" height="22" rx="1.500" fill="#1757a6" /><path d="M2 2h9v18H2z" fill="#f4f4f4" /><path d="M13 2h9v10h-9z" fill="#62cdfb" /><path d="M13 12h9v4h-9z" fill="#1a8ae0" /><path d="M13 16h9v4h-9z" fill="#45b4f4" /></svg>
        <svg viewBox="0 0 12 8" className="ml-8 h-2 w-3" fill="none" stroke="#1b1b1b" strokeWidth="1.500"><path d="M1 6.500L6 1.500l5 5" /></svg>
        <span className="ml-[20px] text-[12px] leading-none tracking-[-0.2px]">ENG</span>
        <svg viewBox="0 0 18 17" className="ml-[17px] h-[17px] w-[18px]" fill="none" stroke="#1b1b1b" strokeWidth="1.200"><path d="M11 1.500H1.500v11h10M4 15.500h8M8 12.500v3M14.500 6v9.500h2M12.500 1h4v4.500h-4z" /></svg>
        <svg viewBox="0 0 16 15" className="ml-[7px] h-[15px] w-4" fill="none" stroke="#1b1b1b" strokeWidth="1.200"><path d="M8 1L4 4.500H1.500v4H4l1.500 1.500M8 1v4" /><circle cx="10.500" cy="9.500" r="4.800" fill="#1b1b1b" stroke="none" /><path d="M8.800 7.800l3.400 3.400M12.200 7.800l-3.400 3.400" stroke="#fff" /></svg>
        <div className="ml-[14px] flex w-[50px] flex-col items-end gap-1 text-[12px] leading-none whitespace-nowrap">
          <span className="tracking-[-0.2px]">1:26 PM</span>
          <span className="tracking-[-0.1px]">4/3/2025</span>
        </div>
        <svg viewBox="0 0 16 18" className="mr-[20px] ml-2 h-[17px] w-[15px]" fill="none" stroke="#1b1b1b" strokeWidth="1.200"><path d="M1.500 13.500c1.500-2 1.500-4 1.500-6a5 5 0 0 1 10 0c0 2 0 4 1.500 6zM6 14c0 2.500 4 2.500 4 0" /></svg>
      </div>
    </div>
  );
}

export default function App() {
  return (
    <div className={"flex h-[1080px] w-[1920px] flex-col overflow-hidden bg-black " + UI}>
      <TitleBar />
      <MenuBar />
      <VmTabs />
      <div className="flex grow justify-center border-l border-[#777] pt-[60px] pr-px">
        <Guest />
      </div>
      <StatusBar />
      <Taskbar />
    </div>
  );
}
